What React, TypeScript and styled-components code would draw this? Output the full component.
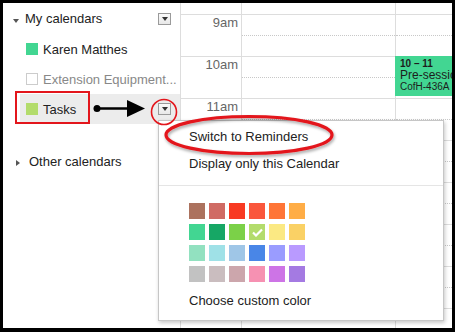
import styled, { createGlobalStyle } from "styled-components";

const GlobalStyle = createGlobalStyle`
  html, body {
    margin: 0;
    padding: 0;
    background: #fff;
  }
  body {
    font-family: "Liberation Sans", Arial, sans-serif;
    font-size: 13px;
    color: #222;
  }
`;

const Frame = styled.div`
  position: relative;
  box-sizing: border-box;
  width: 455px;
  height: 332px;
  border-style: solid;
  border-color: #000;
  border-width: 3px 3px 4px 3px;
  display: flex;
  overflow: hidden;
  background: #fff;
`;

const Sidebar = styled.div`
  width: 177px;
  flex-shrink: 0;
  display: flex;
  flex-direction: column;
`;

const SectionHeader = styled.div<{ $gap?: number }>`
  height: 31px;
  margin-top: ${(p) => p.$gap ?? 0}px;
  display: flex;
  align-items: center;
  padding-left: 10px;
`;

const Caret = styled.span<{ $open?: boolean }>`
  width: 0;
  height: 0;
  margin-right: ${(p) => (p.$open ? 6 : 9)}px;
  margin-top: ${(p) => (p.$open ? 4 : 2)}px;
  ${(p) =>
    p.$open
      ? `border-left: 3.5px solid transparent;
         border-right: 3.5px solid transparent;
         border-top: 4px solid #555;`
      : `margin-left: 3px;
         border-top: 3.5px solid transparent;
         border-bottom: 3.5px solid transparent;
         border-left: 4px solid #555;`}
`;

const DropButton = styled.span`
  box-sizing: border-box;
  width: 13px;
  height: 12px;
  margin-left: auto;
  margin-right: 9px;
  border: 1px solid #9a9a9a;
  background: linear-gradient(#fafafa, #e8e8e8);
  display: flex;
  align-items: center;
  justify-content: center;
  &::after {
    content: "";
    width: 0;
    height: 0;
    border-left: 3.5px solid transparent;
    border-right: 3.5px solid transparent;
    border-top: 4px solid #333;
  }
`;

const CalendarRow = styled.div<{ $selected?: boolean }>`
  height: 30px;
  margin-left: 17px;
  padding-left: 6px;
  display: flex;
  align-items: center;
  background: ${(p) => (p.$selected ? "#ececec" : "transparent")};
`;

const Swatch = styled.span<{ $color: string }>`
  box-sizing: border-box;
  width: 12px;
  height: 12px;
  margin-right: 5px;
  flex-shrink: 0;
  background: ${(p) => p.$color};
  border: ${(p) => (p.$color === "#fff" ? "1px solid #ccc" : "none")};
`;

const Grid = styled.div`
  flex: 1;
  display: flex;
  flex-direction: column;
  border-left: 1px solid #ddd;
`;

const HourRow = styled.div<{ $stub?: boolean }>`
  box-sizing: border-box;
  height: ${(p) => (p.$stub ? 11 : 42)}px;
  flex-shrink: 0;
  display: flex;
  border-top: ${(p) => (p.$stub ? "none" : "1px solid #ddd")};
`;

const TimeLabel = styled.div`
  width: 60px;
  flex-shrink: 0;
  box-sizing: border-box;
  padding: 1px 3px 0 0;
  text-align: right;
  line-height: 14px;
  color: #666;
`;

const DayCell = styled.div<{ $wide?: boolean; $dotted?: boolean }>`
  position: relative;
  ${(p) => (p.$wide ? "width: 153px; flex-shrink: 0;" : "flex: 1;")}
  border-left: 1px solid #ddd;
  ${(p) =>
    p.$dotted &&
    `&::after {
      content: "";
      position: absolute;
      left: 0;
      right: 0;
      top: 20px;
      border-top: 1px dotted #c8c8c8;
    }`}
`;

const EventChip = styled.div`
  position: absolute;
  z-index: 1;
  top: -1px;
  left: -1px;
  right: 0;
  height: 40px;
  box-sizing: border-box;
  padding: 2px 0 0 5px;
  background: #42d692;
  color: #1d1d1d;
  white-space: nowrap;
  overflow: hidden;
`;

const EventTime = styled.div`
  font-size: 10px;
  font-weight: bold;
  line-height: 11px;
`;

const EventTitle = styled.div`
  font-size: 12px;
  line-height: 12px;
`;

const EventPlace = styled.div`
  font-size: 10px;
  line-height: 12px;
`;

const Menu = styled.div`
  position: absolute;
  z-index: 5;
  left: 155px;
  top: 117px;
  width: 286px;
  box-sizing: border-box;
  padding: 2px 0 6px;
  background: #fff;
  border: 1px solid #c6c6c6;
  box-shadow: 1px 2px 4px rgba(0, 0, 0, 0.22);
`;

const MenuItem = styled.div<{ $top?: number }>`
  height: 27px;
  line-height: 27px;
  padding-left: 30px;
  margin-top: ${(p) => p.$top ?? 0}px;
  color: #222;
  white-space: nowrap;
`;

const Separator = styled.div`
  margin: 8px 0 17px;
  border-top: 1px solid #e5e5e5;
`;

const Palette = styled.div`
  display: grid;
  grid-template-columns: repeat(6, 16px);
  column-gap: 4px;
  row-gap: 5px;
  padding-left: 30px;
`;

const ColorChip = styled.div<{ $color: string }>`
  width: 16px;
  height: 16px;
  background: ${(p) => p.$color};
  display: flex;
  align-items: center;
  justify-content: center;
`;

const Annotations = styled.svg`
  position: absolute;
  z-index: 10;
  left: -3px;
  top: -3px;
  width: 455px;
  height: 332px;
  pointer-events: none;
`;

const palette = [
  "#ac725e", "#d06b64", "#f83a22", "#fa573c", "#ff7537", "#ffad46",
  "#42d692", "#16a765", "#7bd148", "#b3dc6c", "#fbe983", "#fad165",
  "#92e1c0", "#9fe1e7", "#9fc6e7", "#4986e7", "#9a9cff", "#b99aff",
  "#c2c2c2", "#cabdbf", "#cca6ac", "#f691b2", "#cd74e6", "#a47ae2",
];

const hours = ["9am", "10am", "11am", "", "", "", "", ""];

export default function App() {
  return (
    <>
      <GlobalStyle />
      <Frame>
        <Sidebar>
          <SectionHeader>
            <Caret $open />
            My calendars
            <DropButton />
          </SectionHeader>
          <CalendarRow>
            <Swatch $color="#42d692" />
            Karen Matthes
          </CalendarRow>
          <CalendarRow>
            <Swatch $color="#fff" />
            <span style={{ color: "#888" }}>Extension Equipment...</span>
          </CalendarRow>
          <CalendarRow $selected>
            <Swatch $color="#b3dc6c" />
            Tasks
            <DropButton />
          </CalendarRow>
          <SectionHeader $gap={22}>
            <Caret />
            Other calendars
          </SectionHeader>
        </Sidebar>

        <Grid>
          <HourRow $stub>
            <TimeLabel />
            <DayCell $wide />
            <DayCell />
          </HourRow>
          {hours.map((h, i) => (
            <HourRow key={i}>
              <TimeLabel>{h}</TimeLabel>
              <DayCell $wide $dotted />
              <DayCell $dotted>
                {h === "10am" && (
                  <EventChip>
                    <EventTime>10 – 11</EventTime>
                    <EventTitle>Pre-session</EventTitle>
                    <EventPlace>CofH-436A</EventPlace>
                  </EventChip>
                )}
              </DayCell>
            </HourRow>
          ))}
        </Grid>

        <Menu>
          <MenuItem>Switch to Reminders</MenuItem>
          <MenuItem>Display only this Calendar</MenuItem>
          <Separator />
          <Palette>
            {palette.map((c) => (
              <ColorChip key={c} $color={c}>
                {c === "#b3dc6c" && (
                  <svg width="11" height="9" viewBox="0 0 11 9">
                    <path
                      d="M1 4.5 L4 7.5 L10 1.5"
                      fill="none"
                      stroke="#fff"
                      strokeWidth="2.2"
                    />
                  </svg>
                )}
              </ColorChip>
            ))}
          </Palette>
          <MenuItem $top={5}>Choose custom color</MenuItem>
        </Menu>

        <Annotations viewBox="0 0 455 332">
          <defs>
            <filter id="shadow" x="-10%" y="-30%" width="120%" height="160%">
              <feDropShadow dx="1" dy="2" stdDeviation="1.5" floodColor="#000" floodOpacity="0.35" />
            </filter>
          </defs>
          <rect x="16" y="92" width="73" height="31" fill="none" stroke="#e3161c" strokeWidth="2" />
          <circle cx="97" cy="108.5" r="3.5" fill="#000" />
          <line x1="97" y1="108.5" x2="130" y2="108.5" stroke="#000" strokeWidth="2.6" />
          <polygon points="127,100 145,108.5 127,117" fill="#000" />
          <circle cx="164" cy="112" r="12.5" fill="none" stroke="#e3161c" strokeWidth="1.6" />
          <ellipse
            cx="249"
            cy="135"
            rx="83"
            ry="18.5"
            fill="none"
            stroke="#e3161c"
            strokeWidth="3.2"
            filter="url(#shadow)"
          />
        </Annotations>
      </Frame>
    </>
  );
}
